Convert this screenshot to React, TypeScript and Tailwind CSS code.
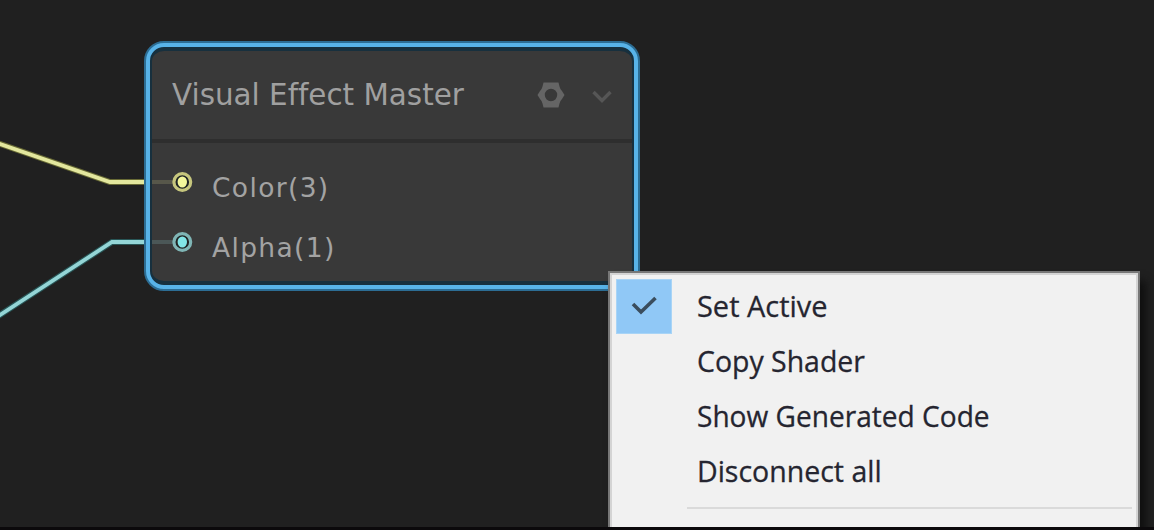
import React from "react";

type Port = { label: string; ring: string; dot: string; stub: string };

const ports: Port[] = [
  { label: "Color(3)", ring: "#c6c67d", dot: "#f3f79b", stub: "#57574a" },
  { label: "Alpha(1)", ring: "#7fb5b5", dot: "#82e5e6", stub: "#4b5757" },
];

const menuItems = [
  { label: "Set Active", checked: true, fit: "scale-x-[0.965]" },
  { label: "Copy Shader", checked: false, fit: "scale-x-[0.948]" },
  { label: "Show Generated Code", checked: false, fit: "scale-x-[0.936]" },
  { label: "Disconnect all", checked: false, fit: "scale-x-[0.95]" },
];

function Wires() {
  return (
    <svg className="absolute left-0 top-0" width="146" height="330" viewBox="0 0 146 330" fill="none">
      <path d="M-4 142.5 L110 182 H146" stroke="#686a35" strokeWidth="6" />
      <path d="M-4 142.5 L110 182 H146" stroke="#e3e79e" strokeWidth="3.8" />
      <path d="M-4 317.5 L112 242 H146" stroke="#285657" strokeWidth="6" />
      <path d="M-4 317.5 L112 242 H146" stroke="#94d5d6" strokeWidth="3.8" />
    </svg>
  );
}

function PortRow({ port }: { port: Port }) {
  return (
    <div className="flex h-[60px] items-center">
      <svg className="-mt-px shrink-0" width="42" height="24" viewBox="0 0 42 24" fill="none">
        <path d="M0 12H21" stroke={port.stub} strokeWidth="4" />
        <circle cx="30.3" cy="12" r="8.4" fill="#202525" stroke={port.ring} strokeWidth="3.2" />
        <ellipse cx="30.3" cy="12" rx="4.7" ry="5.5" fill={port.dot} />
      </svg>
      <span className="ml-[18px] mt-[12px] text-[26.5px] leading-none tracking-[1.35px] text-[#a3a3a3]">{port.label}</span>
    </div>
  );
}

function MasterNode() {
  return (
    <section className="absolute left-[144px] top-[41px] h-[250px] w-[496px] rounded-[20px] border-2 border-[#2c6d94] bg-[#58b3e8] p-1 font-['DejaVu_Sans',Verdana,sans-serif]">
      <div className="flex h-full flex-col overflow-hidden rounded-[14px] border-2 border-y-4 border-[#17303e] bg-[#393939]">
        <header className="flex h-[92px] shrink-0 items-center border-b-4 border-[#2e2e2e] pl-5">
          <h1 className="mt-px w-[365px] whitespace-nowrap text-[29.4px] leading-none text-[#a0a0a0] [font-variant-ligatures:none]">
            Visual Effect Master
          </h1>
          <svg className="-mt-px shrink-0" width="28" height="26" viewBox="0 0 28 26">
            <path
              fillRule="evenodd"
              fill="#656565"
              d="M6.5 0.5 H21.5 L22.5 4.5 Q23.2 7.5 25 9 L27.5 13 L25 17 Q23.2 18.5 22.5 21.5 L21.5 25.5 H6.5 L5.5 21.5 Q4.8 18.5 3 17 L0.5 13 L3 9 Q4.8 7.5 5.5 4.5 Z M14 6.8 A6.2 6.2 0 1 0 14 19.2 A6.2 6.2 0 1 0 14 6.8 Z"
            />
          </svg>
          <svg className="ml-[27px] mt-[3px] shrink-0" width="20" height="14" viewBox="0 0 20 14" fill="none">
            <path d="M1.5 2 L10 10.5 L18.5 2" stroke="#565656" strokeWidth="3.4" />
          </svg>
        </header>
        <div className="flex flex-col pt-[9px]">
          {ports.map((port) => (
            <PortRow key={port.label} port={port} />
          ))}
        </div>
      </div>
    </section>
  );
}

function ContextMenu() {
  return (
    <div
      role="menu"
      className="absolute left-[608px] top-[271px] h-[270px] w-[532px] border-2 border-[#777777] bg-[#f1f1f1] font-['Open_Sans','Noto_Sans',sans-serif] shadow-[6px_10px_8px_#101010]"
    >
      <div className="h-full border-2 border-[#d4d4d4] pl-1 pr-1 pt-1">
        {menuItems.map((item) => (
          <div key={item.label} role="menuitem" className="flex h-[55px] items-center">
            <span
              className={
                item.checked
                  ? "flex h-[55px] w-[56px] items-center justify-center border border-[#a8d4f6] bg-[#90c8f6]"
                  : "h-[55px] w-[56px]"
              }
            >
              {item.checked && (
                <svg className="-mt-[3px]" width="28" height="22" viewBox="0 0 28 22" fill="none">
                  <path d="M3 10 L11 18 L25.5 4" stroke="#3a4d5d" strokeWidth="3.6" />
                </svg>
              )}
            </span>
            <span
              className={`-mt-[2px] ml-[25px] origin-left whitespace-nowrap text-[30px] leading-none text-[#252530] [-webkit-text-stroke:0.3px_#252530] ${item.fit}`}
            >
              {item.label}
            </span>
          </div>
        ))}
        <hr className="ml-[71px] mt-[8px] border-t-2 border-[#dadada]" />
      </div>
    </div>
  );
}

export default function App() {
  return (
    <main className="relative h-[530px] w-[1154px] overflow-hidden bg-[#202020]">
      <Wires />
      <MasterNode />
      <ContextMenu />
      <div className="absolute bottom-0 left-0 h-[3px] w-full bg-[#0b090b]" />
    </main>
  );
}
